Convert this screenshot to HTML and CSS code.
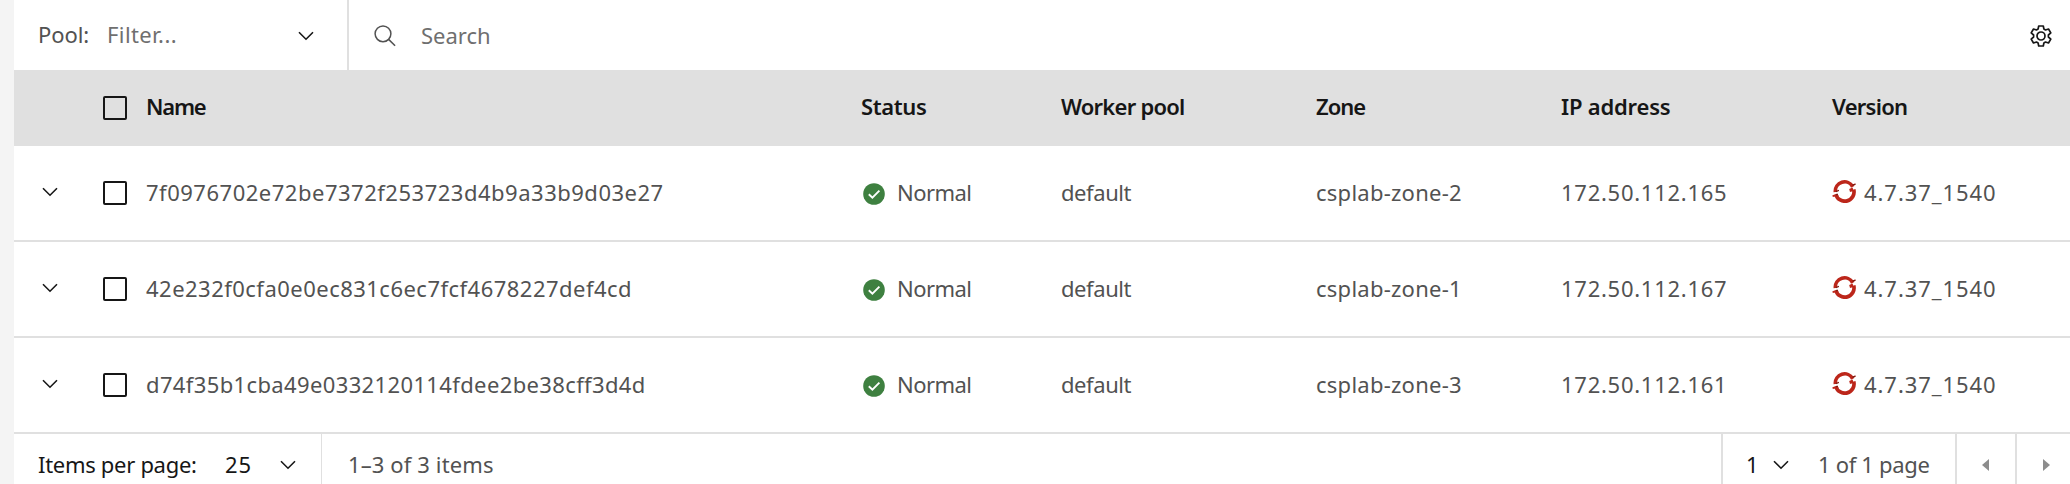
FILE: index.html
```html
<!DOCTYPE html>
<html lang="en">
<head>
<meta charset="utf-8">
<title>Worker nodes</title>
<link rel="stylesheet" href="styles.css">
</head>
<body>
<svg class="defs" aria-hidden="true">
  <symbol id="chevron" viewBox="0 0 16 10"><path d="M1 1.2 8 8.2 15 1.2" fill="none" stroke="#161616" stroke-width="1.6"/></symbol>
  <symbol id="ok" viewBox="0 0 22 22"><circle cx="11" cy="11" r="10.8" fill="#3e8040"/><path d="m5.800 11.200 3.600 3.500 7-7" fill="none" stroke="#fff" stroke-width="1.900"/></symbol>
  <symbol id="openshift" viewBox="0 0 24 24">
    <path d="M3.400 13A9.200 9.200 0 0 1 20.700 7.800M21.700 10.500A9.200 9.200 0 0 1 3.900 15.400" fill="none" stroke="#bc261a" stroke-width="3.700"/>
    <path d="m19.500 6 3.900-1.500.1 1.300-3.300 1.500zM.4 16.200l4.600-1.500 1.500 2-5.700 1.300zM17.200 9.900l3.400-1.500 1 3.500-3.600 1z" fill="#bc261a"/>
    <path d="m3.600 12 3.300-1.200.1 1.300-3 1.100zM20.500 5.500l2.800-1.100.2 1.300-3 1.300zM3.700 15.200l1.800-.6.6 1.200-1.700.8z" fill="#7d1c13"/>
  </symbol>
</svg>
<main class="panel">
  <div class="toolbar">
    <div class="filter"><span class="filter-label">Pool:</span><span class="placeholder filter-value">Filter...</span><svg class="chevron"><use href="#chevron"/></svg></div>
    <div class="search">
      <svg class="search-icon" viewBox="0 0 22 22" fill="none" stroke="#525252" stroke-width="1.5"><circle cx="9" cy="8.8" r="7.9"/><path d="m14.6 14.4 6.5 6.4"/></svg>
      <span class="placeholder search-text">Search</span>
    </div>
    <svg class="gear" viewBox="0 0 22 22" fill="none" stroke="#161616" stroke-width="1.7" stroke-linejoin="round"><path d="M8.700 1h4.600l.6 3.100 1.600.9 3-1 2.300 3.900-2.400 2.100v2l2.400 2.100-2.300 3.900-3-1-1.600.9-.6 3.100H8.700l-.6-3.100-1.600-.9-3 1-2.300-3.900L3.600 12v-2L1.200 7.900l2.300-3.900 3 1 1.600-.9z"/><circle cx="11" cy="11" r="4"/></svg>
  </div>
  <div class="row head">
    <span></span><i class="checkbox"></i>
    <span class="h-name">Name</span><span class="h-status">Status</span><span class="h-pool">Worker pool</span><span class="h-zone">Zone</span><span class="h-ip">IP address</span><span class="h-version">Version</span>
  </div>
  <div class="row">
    <svg class="chevron"><use href="#chevron"/></svg><i class="checkbox"></i>
    <span class="name name-wide">7f0976702e72be7372f253723d4b9a33b9d03e27</span>
    <span class="status"><svg class="ok"><use href="#ok"/></svg><span>Normal</span></span><span class="pool">default</span><span class="zone">csplab-zone-2</span><span class="ip">172.50.112.165</span>
    <span class="version"><svg class="openshift"><use href="#openshift"/></svg>4.7.37_1540</span>
  </div>
  <div class="row">
    <svg class="chevron"><use href="#chevron"/></svg><i class="checkbox"></i>
    <span class="name">42e232f0cfa0e0ec831c6ec7fcf4678227def4cd</span>
    <span class="status"><svg class="ok"><use href="#ok"/></svg><span>Normal</span></span><span class="pool">default</span><span class="zone">csplab-zone-1</span><span class="ip">172.50.112.167</span>
    <span class="version"><svg class="openshift"><use href="#openshift"/></svg>4.7.37_1540</span>
  </div>
  <div class="row">
    <svg class="chevron"><use href="#chevron"/></svg><i class="checkbox"></i>
    <span class="name name-tight">d74f35b1cba49e0332120114fdee2be38cff3d4d</span>
    <span class="status"><svg class="ok"><use href="#ok"/></svg><span>Normal</span></span><span class="pool">default</span><span class="zone">csplab-zone-3</span><span class="ip">172.50.112.161</span>
    <span class="version"><svg class="openshift"><use href="#openshift"/></svg>4.7.37_1540</span>
  </div>
  <div class="pagination">
    <div class="page-size"><span class="size-label">Items per page:</span><span class="size-value">25</span><svg class="chevron"><use href="#chevron"/></svg></div>
    <span class="range">1–3 of 3 items</span>
    <div class="page-select"><span class="page-value">1</span><svg class="chevron"><use href="#chevron"/></svg><span class="page-count">1 of 1 page</span></div>
    <div class="page-button prev"><svg class="caret" viewBox="0 0 7 12"><path d="M7 0v12L0 6z" fill="#8d8d8d"/></svg></div>
    <div class="page-button next"><svg class="caret" viewBox="0 0 7 12"><path d="M0 0v12l7-6z" fill="#8d8d8d"/></svg></div>
  </div>
</main>
</body>
</html>
```
FILE: styles.css
```css
* { box-sizing: border-box; }
html, body { margin: 0; height: 484px; overflow: hidden; }
body {
  padding-left: 14px;
  background: #f4f4f4;
  color: #525252;
  font: 22px/30px "Noto Sans", sans-serif;
  white-space: nowrap;
}
svg { display: block; flex: none; }
.defs { width: 0; height: 0; position: absolute; }
.panel { height: 484px; background: #fff; overflow: hidden; }
.chevron { width: 16px; height: 10px; }

.toolbar { display: flex; height: 70px; align-items: stretch; }
.filter { display: flex; align-items: center; width: 335px; padding: 2px 33px 0 24px; border-right: 2px solid #e0e0e0; }
.filter .chevron { margin-left: auto; }
.filter-label { width: 69px; padding-bottom: 4px; letter-spacing: -.1px; }
.placeholder { color: #6f6f6f; }
.filter-value { letter-spacing: .4px; padding-bottom: 4px; }
.search { display: flex; align-items: center; flex: 1; padding: 2px 0 0 25px; }
.search-icon { width: 22px; height: 22px; }
.search-text { margin-left: 25px; padding-bottom: 2px; }
.gear { width: 22px; height: 22px; align-self: center; margin: 2px 18px 0 0; }

.row {
  display: grid;
  grid-template-columns: 61px 43px 715px 200px 255px 245px 271px 1fr;
  align-items: center;
  height: 96px;
  padding-left: 28px;
  border-bottom: 2px solid #e0e0e0;
}
.row .chevron { margin-top: -3px; }
.head { height: 76px; border: 0; background: #e0e0e0; color: #161616; font-weight: 600; }
.checkbox { width: 24px; height: 24px; border: 2px solid #161616; border-radius: 2px; margin-top: -1px; }
.head .checkbox { margin-top: 0; }
.row > span { padding-bottom: 3px; }
.head > span { padding-bottom: 5px; }
.h-name { letter-spacing: -1.2px; }
.h-status { letter-spacing: -.37px; }
.h-pool { letter-spacing: -.76px; }
.h-zone { letter-spacing: -1px; }
.h-ip { letter-spacing: -.2px; }
.h-version { letter-spacing: -.75px; }
.name { letter-spacing: .48px; }
.name-wide { letter-spacing: .51px; }
.name-tight { letter-spacing: .37px; }
.row > .status { display: flex; align-items: center; gap: 12px; padding: 0 0 0 2px; letter-spacing: -.55px; }
.status > span { padding-bottom: 2px; }
.ok { width: 22px; height: 22px; margin-top: 1px; }
.pool { letter-spacing: -.42px; }
.zone { letter-spacing: .25px; }
.ip { letter-spacing: .73px; }
.version { display: flex; align-items: center; gap: 8px; letter-spacing: .94px; }
.openshift { width: 24px; height: 24px; margin-top: -2px; }

.pagination { display: flex; height: 64px; padding-bottom: 4px; }
.pagination .chevron, .caret { margin-top: 2px; }
.pagination span { padding-bottom: 1px; }
.page-size { display: flex; align-items: center; width: 308px; height: 60px; padding-left: 24px; border-right: 1px solid #e0e0e0; color: #161616; }
.size-label { width: 187px; letter-spacing: -.3px; }
.size-value { width: 55px; letter-spacing: 1px; }
.range { display: flex; align-items: center; padding-left: 26px; flex: 1; letter-spacing: .12px; }
.page-select { display: flex; align-items: center; width: 234px; border-left: 2px solid #e0e0e0; padding-left: 23px; }
.page-value { width: 27px; color: #161616; }
.page-count { margin-left: 29px; letter-spacing: -.32px; }
.page-button { display: flex; align-items: center; border-left: 2px solid #e0e0e0; }
.caret { width: 7px; height: 12px; }
.prev { width: 60px; padding-left: 25px; }
.next { width: 55px; padding-left: 26px; }
```
